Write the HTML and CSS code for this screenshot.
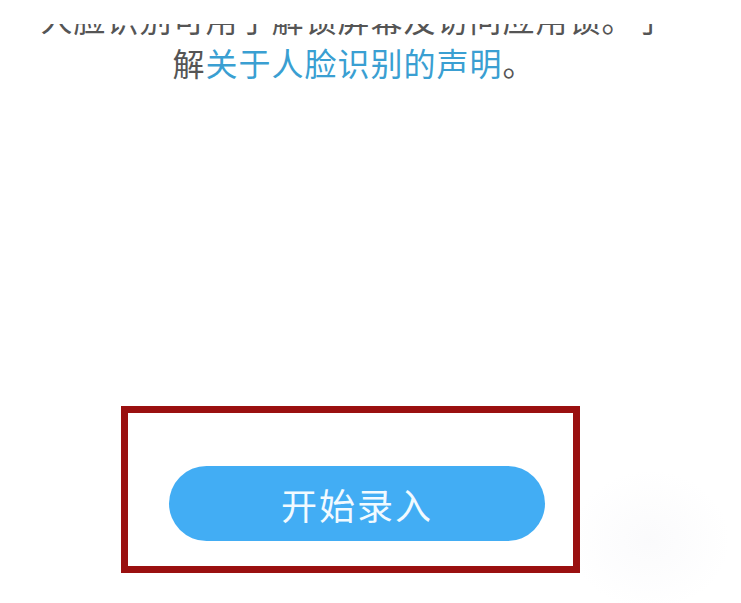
FILE: index.html
```html
<!DOCTYPE html>
<html lang="zh-CN">
<head>
<meta charset="utf-8">
<link rel="stylesheet" href="styles.css">
</head>
<body>
<div class="page">
  <div class="clip">
    <p class="intro">人脸识别可用于解锁屏幕及访问应用锁。了解<a class="link">关于人脸识别的声明</a>。</p>
  </div>
  <div class="highlight">
    <button class="start">开始录入</button>
  </div>
</div>
</body>
</html>
```
FILE: styles.css
```css
html, body {
  margin: 0;
  padding: 0;
  background: #ffffff;
}
body {
  width: 741px;
  height: 603px;
  overflow: hidden;
  background:
    radial-gradient(ellipse 80px 70px at 650px 540px, rgba(205, 205, 220, 0.09), rgba(255, 255, 255, 0) 100%),
    #ffffff;
}
.page {
  display: flex;
  flex-direction: column;
  padding-top: 24px;
  font-family: "Noto Sans CJK SC", "Noto Sans", sans-serif;
}
.clip {
  overflow: hidden;
  height: 70px;
}
.intro {
  margin: -28px 0 0 34px;
  width: 640px;
  font-size: 32px;
  line-height: 44px;
  letter-spacing: 1px;
  color: #555555;
  text-align: center;
}
.link {
  color: #3a9fd2;
}
.highlight {
  margin: 312px 0 0 121px;
  width: 445px;
  height: 153px;
  border: 7px solid #9a1010;
  box-sizing: content-box;
  display: flex;
  align-items: flex-start;
}
.start {
  margin: 53px 0 0 41px;
  width: 376px;
  height: 75px;
  border: none;
  border-radius: 38px;
  background: #42adf4;
  color: #f2faff;
  font-family: "Noto Sans CJK SC", "Noto Sans", sans-serif;
  font-size: 36px;
  letter-spacing: 2px;
  padding: 0;
  display: flex;
  align-items: center;
  justify-content: center;
}
```
